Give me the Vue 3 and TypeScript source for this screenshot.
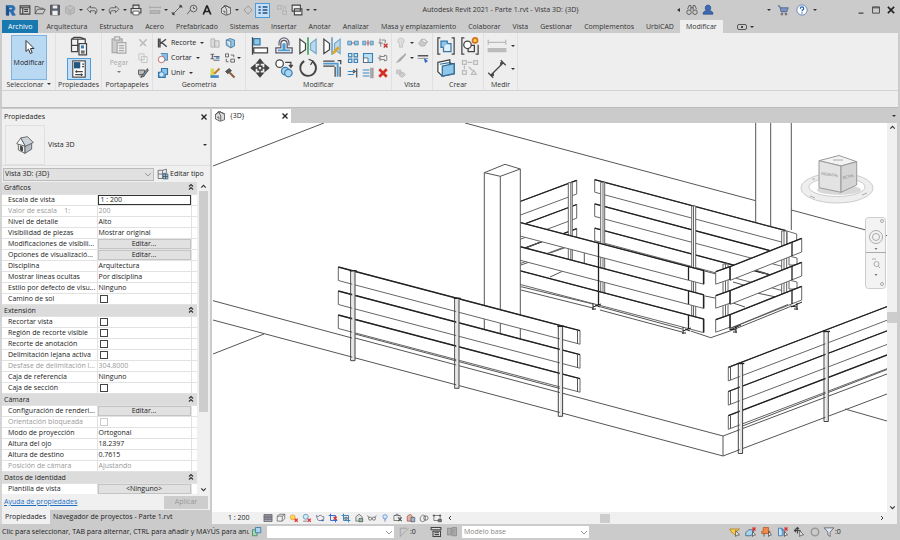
<script setup lang="ts">
import { ref } from 'vue'

type Point = [number, number]
interface Tool { icon: string; label: string; kind?: 'on' | 'caret' | 'gap' }
interface Prop { name: string; value?: string; kind?: 'text' | 'button' | 'check' | 'input'; off?: boolean }
interface Section { title: string; rows: Prop[] }

const icons: Record<string, string> = {
  revit: '<path d="M3 2h7c3 0 4.500 1.500 4.500 4 0 2-1 3-2.500 3.500L15 15h-4l-2.500-5H6.500v5H3z M6.500 4.500v3H9c1.300 0 2-.500 2-1.500s-.700-1.500-2-1.500z" fill="#2b6cb0" stroke="#2b6cb0" fill-rule="evenodd"/><path d="M3 2l3.500 2.500V15H3z" fill="#1c4f86" stroke="none"/>',
  panel: '<path d="M1.500 2.500h13v11h-13z M1.500 5h13 M5 5v8.500 M7 7.500h5 M7 10h5" stroke-width="1.500"/>',
  folder: '<path d="M1.500 13V3.500H6l1.500 2H12V7 M1.500 13l3-6H15l-3 6z"/>',
  save: '<path d="M2 1.500h12v13H2z" fill="#59616c"/><path d="M5 2h6v4H5z M4.500 9h7v5.500h-7z" fill="#eee" stroke="none"/>',
  cubeoff: '<path d="M8 1.500l6 3v7l-6 3-6-3v-7z M2 4.500l6 3 6-3 M8 7.500v7" stroke="#aaa" fill="#bbb"/>',
  undo: '<path d="M6 2.500L1.500 7 6 11.500V9h5c2 0 2 3 1 4.500 3-1.500 4-8-1-8.500H6z"/>',
  redo: '<path d="M10 2.500L14.500 7 10 11.500V9H5c-2 0-2 3-1 4.500C1 12 0 5.500 5 5h5z"/>',
  print: '<path d="M4 6V1.500h8V6 M1.500 6h13v6h-13z" fill="#ddd" stroke-width="1.500"/><path d="M4 9.500h8v5H4z" fill="#fff"/>',
  ruler: '<path d="M1 4.500h14 M1 3v3 M15 3v3 M1.500 9h13v3.500h-13z" stroke="#999" fill="#bbb"/>',
  dim: '<path d="M3 13L13 3 M1 11l4 4 M11 1l4 4"/><circle cx="3" cy="13" r="1.300" fill="#444"/><circle cx="13" cy="3" r="1.300" fill="#444"/>',
  tag: '<circle cx="10" cy="6" r="4.500"/><path d="M6 8l-4.500 5.500 M10 3.500V6h2"/>',
  letter: '<path d="M8 2L3 14M8 2l5 12M4.800 10h6.500" stroke="#222" stroke-width="2.300"/>',
  house: '<path d="M8 2l6 4v7l-6 2-6-3V6z" fill="#ddd"/><path d="M1.500 6.500L6 2l8.500 3M6 2l3 6v6.500 M4 9.500h2.500v3"/>',
  diamond: '<path d="M8 2.500l5.500 5.500L8 13.500 2.500 8z" stroke="#888"/>',
  thin: '<path d="M2 4h3 M2 8h3 M2 12h3 M7.500 4H14 M7.500 8H14 M7.500 12H14" stroke-width="2" stroke="#225080"/>',
  closeoff: '<path d="M2 2h5v5H2z M9 9h5v5H9z M9 2l5 5 M14 2L9 7" stroke="#aaa"/>',
  windows: '<path d="M1.500 1.500h11v8h-11z M4.500 6.500h10v8h-10z" fill="#eee" stroke-width="1.500"/>',
  binocular: '<path d="M2 7l2-5h2.500v6 M14 7l-2-5H9.500v6 M6.500 5h3"/><circle cx="4" cy="11" r="3"/><circle cx="12" cy="11" r="3"/>',
  user: '<path d="M8 1.500c5 0 4 6 2 7.500 4 .500 4.500 2 4.500 4.500h-13C1.500 11 2 9.500 6 9 4 7.500 3 1.500 8 1.500z" fill="#3c69b5" stroke="#274a86"/>',
  cart: '<path d="M1 2.500h2.500l2 8H13L15 5H4" fill="#7b93c0" stroke="#465b86"/><circle cx="6.500" cy="13.500" r="1.200"/><circle cx="12" cy="13.500" r="1.200"/>',
  help: '<circle cx="8" cy="8" r="6.800" fill="#fff" stroke="#4b72aa"/><path d="M5.800 6.200c0-3 4.500-3 4.500 0 0 1.600-2.200 1.600-2.200 3.300M8 11v1.500" stroke="#285fb0" stroke-width="1.700"/>',
  min: '<path d="M4 13h8" stroke-width="2"/>',
  max: '<path d="M2.500 3h11v10h-11z M2.500 4.500h11" stroke-width="1.500"/>',
  close: '<path d="M3 3l10 10M13 3L3 13" stroke="#222" stroke-width="2.600"/>',
  cursor: '<path d="M5 1.500v11l2.500-2.300 1.800 4.300 1.900-.800-1.800-4.200H13z" fill="#fff" stroke="#333"/>',
  family: '<path d="M2 2.500h5v5H2z M7 2.500h6v5H7z M2 7.500h5v5H2z M7 7.500h3 M2 2.500L4 1h5l4 1.500" fill="#f4f4f4"/><path d="M8 6h6v9H8z" fill="#fff"/><path d="M9.500 7.500H12v2.500H9.500z" fill="#3b7db8" stroke="none"/><path d="M9.500 12h3M9.500 13.500h3"/>',
  props: '<path d="M3 1.500h10v13H3z" fill="#fff" stroke="#555"/><path d="M4 2.500h5v5H4z" fill="#235780" stroke="none"/><path d="M10.500 4h1.500M10.500 6h1.500M5 10h6M5 12.500h6M6 9v2M10 11.500v2"/>',
  paste: '<path d="M2.500 3h8v11h-8z" fill="#ccc" stroke="#aaa"/><path d="M4.500 1.500h4V4h-4z M6.500 6h7v8.500h-7z M8 8.500h4 M8 10.500h4 M8 12.500h4" fill="#eaeaea" stroke="#aaa"/>',
  cutoff: '<path d="M3 3l9 9M13 3l-9 9" stroke="#bbb" stroke-width="2"/>',
  copyoff: '<path d="M2.500 2.500h7v8h-7z M6 6h7.500v8H6z" fill="#eee" stroke="#bbb"/>',
  match: '<path d="M2 4h8v6H2z M3 12h7" fill="#bbb"/><path d="M14 2L7 11l-2 3 4-1.500 6-8z" fill="#7e8b98"/>',
  cope: '<path d="M2 2v12M4 2v5l3 1M4 14V9l8-6M7 8l6 5" stroke-width="1.800"/>',
  cut: '<path d="M5 2h9v9H9" fill="#86bde3" stroke="#3876a5"/><circle cx="6" cy="10" r="4.300" fill="#fff" stroke="#a44"/>',
  join: '<path d="M6 2h8v8h-3v4H2V7h4z" fill="#8fc4e8" stroke="#2e76ac" stroke-width="1.500"/><circle cx="6" cy="10" r="3.500" fill="#cbe6f8" stroke="#2e76ac"/>',
  wallcut: '<path d="M2.500 2.500h5v11h-5z M7.500 5h6v8.500h-6z" stroke="#aaa" fill="#ddd"/>',
  beam: '<path d="M2 3h5M4.500 3v6M2 9h5M6 6h8M6 11h8" stroke-width="1.600" stroke="#667"/><path d="M9 8h5" stroke="#3b88c4" stroke-width="2"/>',
  paintw: '<path d="M2 2h5v12H2z" fill="#d6d65a" stroke="none"/><path d="M2 11h11v3.500H2z" fill="#3b88c4" stroke="none"/><path d="M14 2L7 9" stroke-width="2.500" stroke="#c07b29"/>',
  solid: '<path d="M3 4l5-2 6 2v8l-5 2.500V6L3 4v7l6 3.500" fill="#8fc4e8" stroke="#3d6d90"/>',
  split: '<path d="M2 2.500h4v4H2z M9 9.500h5v4H9z M3 9v4h3 M9 4h4v3"/>',
  hammer: '<path d="M2 6l5-4 3 3-5 4z" fill="#555"/><path d="M7 7l7 7" stroke="#8b5e3c" stroke-width="2.500"/>',
  align: '<path d="M2 1v14" stroke-width="1"/><path d="M3 2h5v5H3z" fill="#8ec7ec" stroke="#3679a9"/><path d="M3 9.500h11v4H3z" fill="#fff"/>',
  offset: '<path d="M1.500 13.500V9.500h4V6a2.500 2.500 0 0 1 5 0v3.500h4v4z" stroke="#556" fill="#f8f8f8"/><path d="M3 11.500h4.500V6.500h1v5H13" stroke="#4b9ad0" stroke-width="1.500"/><path d="M4 7.500V5.500a4 4 0 0 1 8 0v2" stroke="#667"/>',
  mirror: '<path d="M1.500 2.500L6 6v5l-4.500 3z" fill="#fff"/><path d="M14.500 2.500L10 6v5l4.500 3z" fill="#b9daf0" stroke="#7aa8c9"/><path d="M8 1v14" stroke="#2e9e48" stroke-width="1.200"/>',
  mirrord: '<path d="M1.500 2.500L6 6v5l-4.500 3z" fill="#fff"/><path d="M14.500 2.500L10 6v5l4.500 3z" fill="#b9daf0" stroke="#7aa8c9"/><path d="M8 1v14" stroke="#3b88c4"/><path d="M13.500 9l-5 5" stroke="#e0a62c" stroke-width="2.200"/>',
  move: '<path d="M8 1L5.500 4h5z M8 15l-2.500-3h5z M1 8l3-2.500v5z M15 8l-3-2.500v5z" fill="#444"/><path d="M8 4v3M8 9v3M4 8h3M9 8h3M6.500 6.500h3v3h-3z" stroke-width="1.200"/>',
  copy: '<circle cx="4.500" cy="4.500" r="3" fill="#fff"/><path d="M9 3.500h4.500V7M12 5.500L13.500 7.500 15 5.500"/><circle cx="9" cy="10.500" r="3" fill="#a9d4ef" stroke="#3a7fb1"/><circle cx="11.500" cy="12" r="3" fill="#a9d4ef" stroke="#3a7fb1"/>',
  rotate: '<path d="M5 2.500a6.300 6.300 0 1 0 6.500.200" stroke-width="1.500"/><path d="M8.500 1l3.500 1.500-2 3"/>',
  trim: '<path d="M1 2.500h9M1 6.500h9" stroke-width="1"/><path d="M1 4.500h11.500V15" stroke="#4b9ad0" stroke-width="1.500"/><path d="M10.500 7v8M14.500 7v8M12.500 2h2.500v3"/>',
  splitel: '<path d="M1 5.500h5v5H1z M10 5.500h5v5h-5z" fill="#8ec7ec" stroke="#4b84aa"/><path d="M6 8h4" stroke="#a33"/>',
  splitgap: '<path d="M1 5.500h4v5H1z M11 5.500h4v5h-4z" fill="#8ec7ec" stroke="#4b84aa"/><path d="M8 4v8M6 8h4" stroke="#a33"/>',
  unpin: '<path d="M4 2v6M2 8h6M5 8v5M6 4h5v4" stroke="#666"/><path d="M9 9l5 5M14 9l-5 5" stroke="#c33" stroke-width="2"/>',
  array: '<path d="M2 2h4.500v4.500H2z M9.500 2H14v4.500H9.500z M2 9.500h4.500V14H2z M9.500 9.500H14V14H9.500z" stroke="#3a7fb1" fill="#d6ebf8" stroke-width="1.500"/>',
  scale: '<path d="M2 2h12v12H2z" stroke="#3a7fb1" fill="#b9dff5" stroke-width="1.500"/><path d="M2 8h6v6H2z" fill="#fff" stroke="#456"/>',
  pin: '<path d="M4 4v8M4 6h6V4l3 1v6l-3 1v-2H4M4 8H1" stroke="#666"/>',
  trims: '<path d="M1 6h8M1 10h8" stroke="#3b88c4" stroke-width="1.500"/><path d="M8 4l3 2-3 2M13 2v12" stroke-width="1.500"/>',
  trimm: '<path d="M1 4h9M1 8h9M1 12h9" stroke="#3b88c4" stroke-width="1.500"/><path d="M12 1v14M14.500 1v14"/>',
  del: '<path d="M3 3l10 10M13 3L3 13" stroke="#d32f24" stroke-width="3.600"/>',
  bulboff: '<path d="M8 1.500c6 0 4.500 6 2 8v4H6v-4c-2.500-2-4-8 2-8z" fill="#ddd" stroke="#bbb"/>',
  boxesoff: '<path d="M2 9l4-6h4l4 3-4 6H5z M6 3l3 5 5-2" fill="#ccc" stroke="#aaa"/>',
  brushoff: '<path d="M14 2L6 9l-4 5 5-2 7-8z" fill="#aaa" stroke="#aaa"/>',
  lines: '<path d="M1 5h14" stroke="#555" stroke-width="2"/><path d="M1 8.500h14" stroke="#777"/><path d="M10 9l1 5 3-2z" fill="#2862c4" stroke="#2862c4"/>',
  coinoff: '<path d="M2 4h6v5H2z M6 8l5-1 3 3-4 4-4-2z" fill="#ccc" stroke="#bbb"/>',
  group: '<path d="M3.500 1.500h-2v13h2M12.500 1.500h2v13h-2"/><path d="M4 4h5v5H4z" fill="#8ec7ec" stroke="#3679a9"/><path d="M6 9v3.500h6V6H9" fill="#dff0fb" stroke="#3679a9"/>',
  creategroup: '<path d="M3.500 1.500h-2v13h2M12.500 14.500h2V7"/><circle cx="6" cy="7" r="3" fill="#fff"/><path d="M6.500 9.500v3h5v-5H9"/><circle cx="12" cy="3.500" r="2" fill="#ffd24d" stroke="#d66f1d" stroke-width="1.300"/>',
  parts: '<path d="M1.500 3.500L11 1.500v3l3.500 0v8L5 14.500 1.500 11z" fill="#fff"/><path d="M3 5l9-1.500M5 6.500l9.500-2v8L5 14.500z" fill="#8ec7ec" stroke="#346f9c"/>',
  assembly: '<path d="M2 2h3v3H2z M11 2h3v3h-3z M2 10h3v3H2z M11 10l2 3h-4z M6 3.500h4 M7 7l3 3 M3.500 6v3" stroke="#bbb"/>',
  measoff: '<path d="M1 5h14M1 3v4M15 3v4" stroke="#bbb"/><path d="M1 10h14v2.500H1z" stroke="#bbb" fill="#bbb"/>',
  measure: '<path d="M3 13L13 3M1 11l4 4M11 1l4 4M5 10.500V13H2.800M11 5.500V3h2.300"/>',
  edittype: '<path d="M1.500 3h6v5h-6z M7.500 3l5-1.500V7l-5 1 M1.500 8v6h6V8" fill="#e6eef5" stroke="#555"/><path d="M8 8h6.500v6.500H8z" fill="#8ec7ec" stroke="#456"/><path d="M8 11.300h6.500M11.300 8v6.500"/>',
  detail: '<path d="M1.500 2.500h13v11h-13z M2 5h12 M2 7.500h12 M2 10h12" fill="#aab"/>',
  style: '<path d="M2 5l4-3h8v7l-4 4H2z M2 5h8v8 M10 5l4-3"/>',
  sun: '<circle cx="6" cy="7" r="4" fill="#ffd65a" stroke="#e09020"/><path d="M9 9l5 5M14 9l-5 5" stroke="#d33" stroke-width="2"/>',
  shadow: '<circle cx="6" cy="6" r="4" fill="#d3eaf7" stroke="#2f7cb4"/><path d="M2 13h6"/><path d="M9 9l5 5M14 9l-5 5" stroke="#d33" stroke-width="2"/>',
  teapot: '<path d="M2 4l3 2c1-3 6-3 7 0l2 0v4l-4 2H6C3 11 4 8 2 4z" stroke="#447"/><path d="M10 12l4 0" stroke="#36a" stroke-width="2"/>',
  crop: '<path d="M4 1v11h11M1 4h11v11" stroke="#36c" stroke-width="1.500"/><path d="M9 6l5 5M14 6l-5 5" stroke="#d33" stroke-width="2"/>',
  cropb: '<path d="M4 1v11h11M1 4h11v11" stroke="#357fb8" stroke-width="1.500"/><path d="M6 7h4v3H6z" fill="#8ec7ec"/>',
  lock: '<path d="M3 6l5-4 5 4v7H3z" fill="#e5e5e5"/><path d="M8 9h6v5H8z" fill="#8fc79a"/>',
  glasses: '<path d="M1 4l2 4M15 4l-3 4"/><circle cx="5" cy="9" r="2.500"/><circle cx="11" cy="9" r="2.500"/>',
  bulb: '<circle cx="8" cy="6" r="3.500" fill="#cfe6fa" stroke="#3b7fd0"/><path d="M6.500 11h3M7 13h2" stroke="#36a"/>',
  camx: '<path d="M1.500 4h10v8h-10z M4 4l1-2h3l1 2"/><path d="M8 7l6 6M14 7l-6 6" stroke="#555" stroke-width="2"/>',
  analyt: '<path d="M2 13V5l5-3 3 3v8z" fill="#eab0a0" stroke="#844"/><path d="M8 7h6v7H8z" fill="#9fb8dc"/>',
  link: '<path d="M2 7l4-4 4 2v7l-4 2-4-2z"/><circle cx="11" cy="8" r="3.500"/>',
  constraint: '<path d="M3 4h10v8H3z M1 4h4 M11 4h4 M3 2v4 M13 2v4"/><path d="M10 10h5v4h-5z" fill="#777"/>',
  sync: '<path d="M2 5h6v8H2z" fill="#a7d7aa" stroke="#36805a"/><path d="M6 2h7v7H6z" fill="#a9d4ef" stroke="#2a6ea5"/>',
  penoff: '<path d="M3 14V3h9M3 14L14 3" stroke="#999"/>',
  worksets: '<path d="M1.500 2h13v3h-13z M4 7h10v7H4z M6 9h6M6 11.500h6" stroke-width="1.400" fill="#ddd"/>',
  optoff: '<path d="M2 3h5v9H2z M8 2h6v11H8z M10 5h2 M10 8h2" stroke="#888" fill="#aaa"/>',
  s1: '<path d="M1 4h13l-5 4v5l-3-3-2-1z" fill="#ffcc4a" stroke="#a87c14"/><path d="M9 6v8l2-2h3z" fill="#fff"/>',
  s2: '<path d="M1 9l4-4h6v4l-3 4H1z" fill="#a9d4ef" stroke="#357"/><path d="M10 2l4 4M14 2l-4 4" stroke="#d33" stroke-width="2"/><path d="M10 7v7l2-2h2z" fill="#fff"/>',
  s3: '<path d="M3 2h7v5h2v3H1V7h2z" fill="#f08a4b" stroke="#b5551c"/><path d="M4 10v4"/><path d="M10 7v7l2-2h2z" fill="#fff"/>',
  s4: '<path d="M2 3h5v10H2z M5 5h4v8" stroke="#2a6ea5" fill="#cfe6fa"/><path d="M10 2l4 4M14 2l-4 4" stroke="#d33" stroke-width="2"/><path d="M10 7v7l2-2h2z" fill="#fff"/>',
  s5: '<path d="M6 2v8M2 6h8M4 4l2-2 2 2M4 8L2 6l2-2" stroke-width="1.500"/><path d="M9 6v8l2-2h3z" fill="#fff"/>',
  s6: '<circle cx="8" cy="8" r="5" stroke="#999" stroke-width="2"/>',
  filter: '<path d="M1.500 2.500h13L9.500 8v6l-3-2V8z" fill="#dfe8f0" stroke="#556"/>',
}

const quick: Tool[] = [
  { icon: 'revit', label: 'Revit' }, { icon: 'panel', label: 'Inicio' },
  { icon: 'folder', label: 'Abrir' }, { icon: 'save', label: 'Guardar' }, { icon: 'cubeoff', label: 'Sincronizar' },
  { icon: '', label: 'Opciones', kind: 'caret' }, { icon: 'undo', label: 'Deshacer' }, { icon: '', label: 'Lista', kind: 'caret' },
  { icon: 'redo', label: 'Rehacer' }, { icon: '', label: 'Lista', kind: 'caret' }, { icon: 'print', label: 'Imprimir' },
  { icon: '', label: '', kind: 'gap' }, { icon: 'ruler', label: 'Medir' }, { icon: '', label: 'Lista', kind: 'caret' },
  { icon: 'dim', label: 'Cota' }, { icon: 'tag', label: 'Etiqueta' }, { icon: 'letter', label: 'Texto' },
  { icon: '', label: '', kind: 'gap' }, { icon: 'house', label: 'Vista 3D' }, { icon: '', label: 'Lista', kind: 'caret' },
  { icon: 'diamond', label: 'Sección' }, { icon: 'thin', label: 'Líneas finas', kind: 'on' },
  { icon: '', label: '', kind: 'gap' }, { icon: 'closeoff', label: 'Cerrar inactivas' }, { icon: 'windows', label: 'Cambiar ventanas' },
  { icon: '', label: 'Lista', kind: 'caret' }, { icon: '', label: 'Personalizar', kind: 'caret' },
]

const tabs = ['Arquitectura', 'Estructura', 'Acero', 'Prefabricado', 'Sistemas', 'Insertar', 'Anotar', 'Analizar',
  'Masa y emplazamiento', 'Colaborar', 'Vista', 'Gestionar', 'Complementos', 'UrbiCAD']

const geometry = [
  { icon: 'cope', text: 'Recorte', a: 'wallcut', b: 'solid', more: false },
  { icon: 'cut', text: 'Cortar', a: 'beam', b: 'split', more: true },
  { icon: 'join', text: 'Unir', a: 'paintw', b: 'hammer', more: false },
]
const bigModify = ['align', 'offset', 'mirror', 'mirrord', 'move', 'copy', 'rotate', 'trim']
const smallModify = ['splitel', 'splitgap', 'unpin', 'array', 'scale', 'pin', 'trims', 'trimm', 'del']

const scale = ref('1 : 200')
const sections: Section[] = [
  { title: 'Gráficos', rows: [
    { name: 'Escala de vista', kind: 'input' },
    { name: 'Valor de escala    1:', value: '200', off: true },
    { name: 'Nivel de detalle', value: 'Alto' },
    { name: 'Visibilidad de piezas', value: 'Mostrar original' },
    { name: 'Modificaciones de visibili...', value: 'Editar...', kind: 'button' },
    { name: 'Opciones de visualizació...', value: 'Editar...', kind: 'button' },
    { name: 'Disciplina', value: 'Arquitectura' },
    { name: 'Mostrar líneas ocultas', value: 'Por disciplina' },
    { name: 'Estilo por defecto de visu...', value: 'Ninguno' },
    { name: 'Camino de sol', kind: 'check' },
  ] },
  { title: 'Extensión', rows: [
    { name: 'Recortar vista', kind: 'check' },
    { name: 'Región de recorte visible', kind: 'check' },
    { name: 'Recorte de anotación', kind: 'check' },
    { name: 'Delimitación lejana activa', kind: 'check' },
    { name: 'Desfase de delimitación l...', value: '304.8000', off: true },
    { name: 'Caja de referencia', value: 'Ninguno' },
    { name: 'Caja de sección', kind: 'check' },
  ] },
  { title: 'Cámara', rows: [
    { name: 'Configuración de renderi...', value: 'Editar...', kind: 'button' },
    { name: 'Orientación bloqueada', kind: 'check', off: true },
    { name: 'Modo de proyección', value: 'Ortogonal' },
    { name: 'Altura del ojo', value: '18.2397' },
    { name: 'Altura de destino', value: '0.7615' },
    { name: 'Posición de cámara', value: 'Ajustando', off: true },
  ] },
  { title: 'Datos de identidad', rows: [
    { name: 'Plantilla de vista', value: '<Ninguno>', kind: 'button' },
  ] },
]

const viewTools = ['detail', 'style', 'sun', 'shadow', 'teapot', 'crop', 'cropb', 'lock', 'glasses', 'bulb', 'camx', 'analyt', 'link', 'constraint']
const selectTools = ['s1', 's2', 's3', 's4', 's5', 's6']

// Each plank is a filled band so that it hides whatever stands behind it.
const plank = (a: Point, b: Point, h: number) => ({
  fill: `M${a[0]} ${a[1]}L${b[0]} ${b[1]}V${b[1] + h}L${a[0]} ${a[1] + h}Z`,
  edge: `M${a[0]} ${a[1]}L${b[0]} ${b[1]}`,
})
const rails = (a: Point, b: Point, h: number, step: number) =>
  [0, 1, 2].map(i => plank([a[0], a[1] + i * step], [b[0], b[1] + i * step], h))

const backLeft = rails([512, 204.5], [576.700, 180.300], 13.700, 24.200)
const backRight = rails([594.700, 179.700], [786, 230.700], 12.500, 24.200)
const sideRails = rails([730, 266.700], [801.700, 238.300], 13.700, 24)
const sideStubs = rails([715.700, 271.700], [730, 266.700], 12.500, 24)
const innerRails = rails([512, 220.300], [704, 270.700], 13.600, 24.200)
const frontRails = rails([338.300, 267], [580, 330.700], 13.500, 24)
const rightRails = rails([728.300, 367.300], [890, 305.500], 13.600, 24.200)
const frontPosts: Point[] = [[350.700, 270.700], [454.700, 298.300], [558.300, 326.300]]
const rightPosts: Point[] = [[738.300, 363.500], [824, 331.500]]
const feet: Point[] = [[593, 303], [683, 327]]
const feetRight: Point[] = [[729, 326], [790, 303]]
</script>

<template>
  <div class="app">
    <header class="titlebar">
      <div class="quick">
        <template v-for="(t, i) in quick" :key="i">
          <span v-if="t.kind === 'gap'" class="gap"></span>
          <button v-else-if="t.kind === 'caret'" class="caret-btn" :aria-label="t.label"><i class="caret"></i></button>
          <button v-else class="cell" :class="{ on: t.kind === 'on' }" :aria-label="t.label">
            <svg class="ic" viewBox="0 0 16 16" v-html="icons[t.icon]"></svg>
          </button>
        </template>
      </div>
      <h1>Autodesk Revit 2021 - Parte 1.rvt - Vista 3D: {3D}</h1>
      <div class="account">
        <i class="caret left"></i>
        <button class="cell" aria-label="Buscar"><svg class="ic" viewBox="0 0 16 16" v-html="icons.binocular"></svg></button>
        <button class="cell" aria-label="Usuario"><svg class="ic" viewBox="0 0 16 16" v-html="icons.user"></svg></button>
      </div>
      <div class="shop">
        <i class="caret"></i>
        <button class="cell" aria-label="Tienda"><svg class="ic" viewBox="0 0 16 16" v-html="icons.cart"></svg></button>
        <button class="cell" aria-label="Ayuda"><svg class="ic" viewBox="0 0 16 16" v-html="icons.help"></svg></button>
        <i class="caret"></i>
      </div>
      <div class="window-tools">
        <button class="cell" aria-label="Minimizar"><svg class="ic sm" viewBox="0 0 16 16" v-html="icons.min"></svg></button>
        <button class="cell" aria-label="Maximizar"><svg class="ic sm" viewBox="0 0 16 16" v-html="icons.max"></svg></button>
        <button class="cell" aria-label="Cerrar"><svg class="ic sm" viewBox="0 0 16 16" v-html="icons.close"></svg></button>
      </div>
    </header>

    <nav class="tabs">
      <button class="tab file">Archivo</button>
      <button v-for="t in tabs" :key="t" class="tab">{{ t }}</button>
      <button class="tab active">Modificar</button>
      <button class="tab extra" aria-label="Estado de la cinta"><i class="pill"><i class="dot"></i></i><i class="caret"></i></button>
    </nav>

    <section class="ribbon">
      <div class="group g-select">
        <div class="body"><button class="big-on"><svg viewBox="0 0 16 16" v-html="icons.cursor"></svg><span>Modificar</span></button></div>
        <div class="title">Seleccionar <i class="caret"></i></div>
      </div>
      <div class="group g-props">
        <div class="body stack">
          <button class="wide" aria-label="Tipo"><svg class="lg" viewBox="0 0 16 16" v-html="icons.family"></svg></button>
          <button class="wide on" aria-label="Propiedades"><svg class="lg" viewBox="0 0 16 16" v-html="icons.props"></svg></button>
        </div>
        <div class="title">Propiedades</div>
      </div>
      <div class="group g-clip">
        <div class="body clip">
          <button class="paste" disabled><svg class="lg" viewBox="0 0 16 16" v-html="icons.paste"></svg><span>Pegar</span><i class="caret"></i></button>
          <div class="rows3">
            <button v-for="n in ['cutoff', 'copyoff', 'match']" :key="n" class="cell" :aria-label="n"><svg class="ic" viewBox="0 0 16 16" v-html="icons[n]"></svg></button>
          </div>
        </div>
        <div class="title">Portapapeles</div>
      </div>
      <div class="group g-geo">
        <div class="body rows3">
          <div v-for="g in geometry" :key="g.text" class="geo-row">
            <button class="geo-btn"><svg class="ic" viewBox="0 0 16 16" v-html="icons[g.icon]"></svg>{{ g.text }}<i class="caret"></i></button>
            <button class="cell" aria-label="Herramienta"><svg class="ic" viewBox="0 0 16 16" v-html="icons[g.a]"></svg></button>
            <button class="cell" aria-label="Herramienta"><svg class="ic" viewBox="0 0 16 16" v-html="icons[g.b]"></svg></button>
            <i class="caret" :class="{ hidden: !g.more }"></i>
          </div>
        </div>
        <div class="title">Geometría</div>
      </div>
      <div class="group g-mod">
        <div class="body mod">
          <div class="big-grid">
            <button v-for="n in bigModify" :key="n" class="big" :aria-label="n"><svg class="lg" viewBox="0 0 16 16" v-html="icons[n]"></svg></button>
          </div>
          <div class="small-grid">
            <button v-for="n in smallModify" :key="n" class="cell" :aria-label="n"><svg class="ic" viewBox="0 0 16 16" v-html="icons[n]"></svg></button>
          </div>
        </div>
        <div class="title">Modificar</div>
      </div>
      <div class="group g-view">
        <div class="body rows3">
          <div class="view-row"><svg class="ic" viewBox="0 0 16 16" v-html="icons.bulboff"></svg><i class="caret"></i><svg class="ic" viewBox="0 0 16 16" v-html="icons.boxesoff"></svg></div>
          <div class="view-row"><svg class="ic" viewBox="0 0 16 16" v-html="icons.brushoff"></svg><i class="caret"></i><svg class="ic" viewBox="0 0 16 16" v-html="icons.lines"></svg></div>
          <div class="view-row"><svg class="ic" viewBox="0 0 16 16" v-html="icons.coinoff"></svg></div>
        </div>
        <div class="title">Vista</div>
      </div>
      <div class="group g-create">
        <div class="body big-grid two">
          <button v-for="n in ['group', 'creategroup', 'parts', 'assembly']" :key="n" class="big" :aria-label="n"><svg class="lg" viewBox="0 0 16 16" v-html="icons[n]"></svg></button>
        </div>
        <div class="title">Crear</div>
      </div>
      <div class="group g-meas">
        <div class="body stack">
          <button class="meas" aria-label="Medir"><svg class="lg" viewBox="0 0 16 16" v-html="icons.measoff"></svg><i class="caret"></i></button>
          <button class="meas" aria-label="Cota"><svg class="lg" viewBox="0 0 16 16" v-html="icons.measure"></svg><i class="caret"></i></button>
        </div>
        <div class="title">Medir</div>
      </div>
    </section>
    <div class="options"></div>

    <main class="work">
      <aside class="side">
        <div class="side-head"><span>Propiedades</span><button aria-label="Cerrar"><svg class="xs" viewBox="0 0 16 16" v-html="icons.close"></svg></button></div>
        <div class="type">
          <div class="thumb">
            <svg viewBox="0 0 24 24">
              <path d="M4 9.500l8 4v8.500l-8-4z" fill="#eef1f4" stroke="#555" /><path d="M12 13.500l8-4.500v8l-8 5z" fill="#b4bcc7" stroke="#555" />
              <path d="M2 10.500l5-7 5.500 10z" fill="#f4f6f8" stroke="#555" /><path d="M7 3.500l8-1.500 7 7-9.500 4.500z" fill="#ccd3db" stroke="#555" />
              <path d="M6.500 13l2.500 1.300v5L6.500 18z" fill="#444" />
            </svg>
          </div>
          <span>Vista 3D</span><i class="caret"></i>
        </div>
        <div class="selector">
          <select aria-label="Vista"><option>Vista 3D: {3D}</option></select>
          <button class="edit-type"><svg class="ic" viewBox="0 0 16 16" v-html="icons.edittype"></svg>Editar tipo</button>
        </div>
        <div class="grid-wrap">
          <table>
            <colgroup><col class="c-name"><col class="c-value"><col class="c-tail"></colgroup>
            <tbody v-for="(s, si) in sections" :key="s.title">
              <tr class="sec"><th colspan="3"><span>{{ s.title }}</span><svg viewBox="0 0 8 8"><path d="M2 3.500L4 1.500l2 2M2 6.500L4 4.500l2 2" fill="none" stroke="#333" stroke-width="1.200" /></svg></th></tr>
              <tr v-for="(r, ri) in s.rows" :key="r.name" :class="{ off: r.off }">
                <td class="name"><label :for="`p${si}-${ri}`">{{ r.name }}</label></td>
                <td class="value">
                  <input v-if="r.kind === 'input'" :id="`p${si}-${ri}`" v-model="scale" class="field" />
                  <button v-else-if="r.kind === 'button'" :id="`p${si}-${ri}`" class="edit">{{ r.value }}</button>
                  <input v-else-if="r.kind === 'check'" :id="`p${si}-${ri}`" type="checkbox" :disabled="r.off" />
                  <output v-else :id="`p${si}-${ri}`">{{ r.value }}</output>
                </td>
                <td class="tail"></td>
              </tr>
            </tbody>
          </table>
          <div class="vbar">
            <svg viewBox="0 0 8 8"><path d="M2 5l2-2 2 2" /></svg>
            <div class="side-thumb"></div>
            <div class="fill"></div>
            <svg viewBox="0 0 8 8"><path d="M2 3l2 2 2-2" /></svg>
          </div>
        </div>
        <div class="side-foot"><a href="#ayuda">Ayuda de propiedades</a><button disabled>Aplicar</button></div>
        <div class="side-tabs"><button class="active">Propiedades</button><button>Navegador de proyectos - Parte 1.rvt</button></div>
      </aside>

      <section class="viewer">
        <div class="doc-tabs">
          <div class="doc"><svg class="ic" viewBox="0 0 16 16" v-html="icons.house"></svg><span>{3D}</span>
            <button aria-label="Cerrar vista"><svg class="xs" viewBox="0 0 16 16" v-html="icons.close"></svg></button></div>
          <i class="caret"></i>
        </div>
        <div class="stage">
          <svg class="scene" viewBox="213 123 674 389" preserveAspectRatio="xMinYMin slice">
            <g class="thin">
              <path d="M213 166L324 123M465 123L755.700 200.700M791.300 210L887 235.700" />
              <path d="M213 300.700L352 338M213 320L723 456V436L355 338M355 334L560 388.500M213 354L264 334" />
              <path d="M723 436L887 374M723 456L887 394M845 409L887 421" />
              <path d="M755.700 123V222M770.700 123V226M791.300 123V230" />
            </g>

            <g v-for="p in backRight" :key="p.fill"><path class="plank" :d="p.fill" /><path class="edge" :d="p.edge" /></g>
            <g v-for="p in backLeft" :key="p.fill"><path class="plank" :d="p.fill" /><path class="edge" :d="p.edge" /></g>
            <path class="post" d="M568.300 182.700h4V262h-4zM570.800 182.700V262M600.700 182.300h4V300h-4zM603 182.300V300M691.700 206h4V320h-4zM693.500 206V320" />
            <path class="post" d="M781.700 231h5V300h-5zM784 231V300M787 231l9.700 3V241l-9.700 3zM789 256l8 2V265h-8zM789 280l8 2V289h-8z" />
            <path class="thin" d="M697 269L716 274M755 270L768 274M733 282L754 288M760 272L781 278M733 303L745 307M752 292L781 298M705 296L715 298" />
            <path class="thin" d="M521 250L543 241M550 253L567 247M521 265L535 260M550 277L563 271M584.300 252V266M521 286.700L593 304M600 306.700L682 329M521 290L593 308M600 310L682 332" />
            <path class="post" d="M723 264h5V322h-5zM725.500 264V322" />

            <g v-for="p in sideRails" :key="p.fill"><path class="plank" :d="p.fill" /><path class="edge" :d="p.edge" /></g>
            <g v-for="p in sideStubs" :key="p.fill"><path class="plank" :d="p.fill" /><path class="edge" :d="p.edge" /></g>
            <path class="edge" d="M792 242V256M792 266V280M792 290V304M730 266V280M730 290V304M730 314V328" />
            <g v-for="p in innerRails" :key="p.fill"><path class="plank" :d="p.fill" /><path class="edge" :d="p.edge" /></g>
            <path class="edge" d="M598.500 243V305M688.500 266V280M688.500 291V304M688.500 315V329M703.500 270V284M703.500 295V308M703.500 319V332" />
            <path class="thin" d="M690.700 331L710.700 337.700L730 331L790 306.700M731 328L788 304.500" />
            <path v-for="f in feet" :key="f[0]" class="foot" :d="`M${f[0]} ${f[1]}v7M${f[0] - 1} ${f[1] + 6}h4M${f[0]} ${f[1] + 4}l8-3M${f[0] + 2} ${f[1] + 2}l5 2`" />
            <path v-for="f in feetRight" :key="f[0]" class="foot" :d="`M${f[0] + 7} ${f[1]}v7M${f[0] + 4} ${f[1] + 6}h4M${f[0]} ${f[1] + 3}l7 1M${f[0] + 1} ${f[1] + 4}l11-5`" />

            <path class="white" d="M484.300 172.700L505 164.300L520.300 169V344L484.300 336z" />
            <path class="thin" d="M484.300 336V172.700L505 164.300L520.300 169V344M484.300 172.700L500.300 176.300L520.300 169M500.300 176.300V340" />

            <g v-for="p in frontRails" :key="p.fill"><path class="plank" :d="p.fill" /><path class="edge" :d="p.edge" /></g>
            <path class="thin" d="M577.500 330V344M577.500 354V368M577.500 378V392" />
            <g v-for="p in rightRails" :key="p.fill"><path class="plank" :d="p.fill" /><path class="edge" :d="p.edge" /></g>
            <path class="thin" d="M730.500 366.500V380M730.500 391V404M730.500 415V428M740 427L887 369.500" />
            <g v-for="p in [...frontPosts, ...rightPosts]" :key="p[0]">
              <path class="post-side" :d="`M${p[0] + 3} ${p[1]}v90`" />
              <path class="post front" :d="`M${p[0]} ${p[1]}h4.300v90h-4.300z`" />
              <path class="edge" :d="`M${p[0] - 1} ${p[1]}h7`" />
            </g>

            <g class="cube">
              <ellipse cx="837" cy="188" rx="36" ry="15" /><ellipse class="hole" cx="837" cy="187" rx="28" ry="9.500" />
              <path class="mark" d="M810 196l5 2M862 195l5-2M812 179h3" />
              <ellipse class="shade" cx="839" cy="190" rx="22" ry="5" />
              <path d="M819 160.700L839 155.500L856.700 161.700L841 166z" fill="#f3f3f3" />
              <path d="M819 160.700L841 166V192.300L819 187.700z" fill="#e3e3e3" />
              <path d="M841 166L856.700 161.700V185L841 192.300z" fill="#d5d5d5" />
              <text x="821" y="175" transform="rotate(7 821 175)">FRONTAL</text>
              <text x="843" y="179" transform="rotate(-12 843 179)">DCHA.</text>
              <path class="mark" d="M833 160h10" />
            </g>
            <g class="navbar">
              <rect x="865.500" y="217.500" width="20" height="71" rx="3" />
              <circle cx="876" cy="237" r="6.500" /><circle cx="876" cy="237" r="3.500" /><circle cx="882" cy="221" r="1.500" /><circle cx="882" cy="284" r="1.500" />
              <path d="M866 252.500h20M872 259h4" /><circle cx="876.500" cy="264" r="2.500" /><path d="M878 266l2 2" />
              <path class="tri" d="M874.500 248h3l-1.500 2zM874.500 274h3l-1.500 2z" />
            </g>
          </svg>
          <div class="vbar view-v">
            <svg viewBox="0 0 8 8"><path d="M2 5l2-2 2 2" /></svg>
            <div class="fill"></div><div class="view-thumb"></div><div class="fill"></div>
            <svg viewBox="0 0 8 8"><path d="M2 3l2 2 2-2" /></svg>
          </div>
        </div>
        <div class="view-bar">
          <span class="ratio">1 : 200</span>
          <button v-for="n in viewTools" :key="n" class="vt" :aria-label="n"><svg class="sm" viewBox="0 0 16 16" v-html="icons[n]"></svg></button>
          <button class="vt" aria-label="Anterior"><svg class="xs" viewBox="0 0 16 16"><path d="M10 4L6 8l4 4" stroke-width="2" /></svg></button>
          <div class="hbar"><div class="h-thumb"></div></div>
          <svg class="xs" viewBox="0 0 16 16"><path d="M6 4l4 4-4 4" stroke-width="2" /></svg>
        </div>
      </section>
    </main>

    <footer class="status">
      <span class="hint">Clic para seleccionar, TAB para alternar, CTRL para añadir y MAYÚS para anular</span>
      <svg class="ic" viewBox="0 0 16 16" v-html="icons.sync"></svg>
      <select class="combo" aria-label="Subproyecto"><option></option></select>
      <span class="count"><svg class="ic" viewBox="0 0 16 16" v-html="icons.penoff"></svg>:0</span>
      <div class="pair">
        <svg class="ic" viewBox="0 0 16 16" v-html="icons.worksets"></svg>
        <svg class="ic" viewBox="0 0 16 16" v-html="icons.optoff"></svg>
      </div>
      <select class="combo" aria-label="Opción de diseño"><option>Modelo base</option></select>
      <div class="sel-tools">
        <button v-for="n in selectTools" :key="n" class="st" :aria-label="n"><svg class="ic" viewBox="0 0 16 16" v-html="icons[n]"></svg></button>
        <span class="count"><svg class="ic" viewBox="0 0 16 16" v-html="icons.filter"></svg>:0</span>
      </div>
    </footer>
  </div>
</template>

<style>
html, body { margin: 0; background: #cbcbcb; }
</style>

<style scoped>
* { box-sizing: border-box; }
.app { height: 100vh; min-height: 540px; display: flex; flex-direction: column; background: #cbcbcb; color: #222; font-family: "Open Sans", "Noto Sans", sans-serif; font-size: 7px; line-height: 10px; overflow: hidden; }
button, input, select { font: inherit; color: inherit; margin: 0; padding: 0; border: 0; background: none; border-radius: 0; }
svg { display: block; flex: none; fill: none; stroke: #444; }
.ic { width: 12px; height: 12px; }
.sm { width: 10px; height: 10px; }
.xs { width: 8px; height: 8px; }
.lg { width: 20px; height: 20px; }
.cell { width: 15px; height: 15px; display: flex; align-items: center; justify-content: center; flex: none; }
.caret { display: inline-block; flex: none; width: 0; height: 0; border: 2px solid transparent; border-top-color: #333; border-bottom-width: 0; }
.caret.left { border: 2px solid transparent; border-right: 3px solid #333; border-left-width: 0; }
.caret.hidden { visibility: hidden; }

.titlebar { height: 20px; flex: none; display: flex; align-items: center; padding: 0 2px; }
.quick { display: flex; align-items: center; flex: 1; }
.caret-btn { width: 7px; height: 15px; display: flex; align-items: center; justify-content: center; flex: none; }
.gap { width: 4px; }
.on { background: #c5e0f6; border: 1px solid #4f9bd6; }
h1 { margin: 0; font-size: 7px; font-weight: 400; color: #333; white-space: nowrap; padding-right: 98px; }
.account, .shop { display: flex; align-items: center; gap: 1px; }
.account { padding-right: 52px; }
.account .caret { margin-right: 3px; }
.shop { gap: 4px; padding-right: 36px; }
.window-tools { display: flex; }

.tabs { height: 13px; flex: none; display: flex; padding-left: 2px; }
.tab { padding: 0 6px; white-space: nowrap; color: #333; line-height: 13px; }
.file { background: #1878b0; color: #fff; margin-right: 2px; }
.active { background: #eee; }
.extra { display: flex; align-items: center; gap: 3px; padding-left: 14px; }
.pill { display: flex; align-items: center; justify-content: center; width: 10px; height: 6px; border: 1px solid #555; border-radius: 2px; }
.dot { width: 2px; height: 2px; background: #444; }

.ribbon { height: 58px; flex: none; display: flex; background: #eee; border-bottom: 1px solid #d2d2d2; margin: 0 2px; }
.group { display: flex; flex-direction: column; border-right: 1px solid #e0e0e0; }
.body { flex: 1; min-height: 0; padding-top: 2px; }
.title { height: 10px; text-align: center; white-space: nowrap; color: #333; }
.title .caret { margin: 0 0 2px 1px; }
.g-select { width: 54px; }
.g-props { width: 46px; }
.g-clip { width: 51px; }
.g-geo { width: 93px; }
.g-mod { width: 146px; }
.g-view { width: 41px; }
.g-create { width: 51px; }
.g-meas { width: 34px; }
.big-on { display: flex; flex-direction: column; align-items: center; gap: 3px; width: 36px; height: 45px; margin: 0 0 0 9px; padding-top: 3px; background: #b9d9f3; border: 1px solid #7fb2de; }
.big-on svg { width: 16px; height: 16px; }
.stack { display: flex; flex-direction: column; align-items: center; gap: 1px; }
.wide { width: 24px; height: 22px; display: flex; align-items: center; justify-content: center; }
.clip { display: flex; justify-content: space-between; padding-left: 7px; padding-right: 2px; }
.paste { display: flex; flex-direction: column; align-items: center; gap: 3px; color: #aaa; }
.paste .caret { border-top-color: #777; }
.rows3 { display: flex; flex-direction: column; }
.geo-row, .view-row { display: flex; align-items: center; height: 15px; }
.geo-row { padding-left: 4px; }
.geo-btn { width: 50px; display: flex; align-items: center; gap: 2px; }
.geo-btn .caret { margin-left: 2px; }
.mod { display: flex; padding-left: 2px; gap: 1px; }
.big-grid { display: grid; grid-template-columns: repeat(4, 24px); grid-auto-rows: 22px; align-content: start; }
.two { grid-template-columns: repeat(2, 24px); padding-left: 1px; }
.big { display: flex; align-items: center; justify-content: center; }
.small-grid { display: grid; grid-template-columns: repeat(3, 15px); grid-auto-rows: 15px; }
.view-row { padding-left: 3px; gap: 3px; }
.meas { display: flex; align-items: center; gap: 4px; height: 22px; }
.options { height: 17px; flex: none; background: #eee; margin: 0 2px 1px; border-bottom: 1px solid #bbb; }

.work { flex: 1; min-height: 0; display: flex; }
.side { width: 210px; flex: none; margin-right: 2px; display: flex; flex-direction: column; background: #f0f0f0; border-left: 2px solid #d4d4d4; }
.side-head { height: 15px; display: flex; align-items: center; justify-content: space-between; padding: 0 2px; }
.type { height: 42px; display: flex; align-items: center; gap: 3px; padding: 0 3px; border-bottom: 1px solid #ddd; }
.type span { flex: 1; }
.thumb { width: 40px; height: 40px; display: flex; align-items: center; justify-content: center; border: 1px solid #e0e0e0; }
.thumb svg { width: 20px; height: 20px; }
.selector { height: 16px; display: flex; align-items: center; gap: 3px; padding-left: 1px; }
select { appearance: none; background-image: linear-gradient(45deg, transparent 40%, #999 40%, #999 60%, transparent 60%), linear-gradient(-45deg, transparent 40%, #999 40%, #999 60%, transparent 60%); background-position: right 5px center, right 2px center; background-size: 3px 3px; background-repeat: no-repeat; }
.selector select { width: 151px; height: 13px; background-color: #e1e1e1; border: 1px solid #bbb; padding-left: 1px; }
.edit-type { display: flex; align-items: center; gap: 1px; white-space: nowrap; }
.grid-wrap { flex: 1; min-height: 0; overflow: hidden; display: flex; gap: 2px; }
table { border-collapse: collapse; table-layout: fixed; background: #fff; align-self: flex-start; width: 195px; }
.c-name { width: 95px; }
.c-value { width: 94px; }
.c-tail { width: 6px; }
tr { height: 11px; }
td, th { padding: 0; line-height: 10px; height: 11px; border-bottom: 1px solid #e2e2e2; text-align: left; font-weight: 400; }
.sec, .sec th { height: 12px; }
.sec th { background: #dcdcdc; padding: 0 2px; }
.sec span { float: left; line-height: 11px; }
.sec svg { float: right; width: 8px; height: 8px; margin-top: 1px; }
.name { padding-left: 6px; }
.name label { display: block; height: 10px; white-space: pre; }
.value { border-left: 1px solid #e2e2e2; border-right: 1px solid #e2e2e2; }
.value > * { display: block; height: 10px; }
.value output { padding-left: 1px; }
.off { color: #999; }
.field { width: 100%; border: 1px solid #333; padding-left: 2px; line-height: 8px; }
.edit { width: 100%; background: #e1e1e1; border: 1px solid #c4c4c4; line-height: 8px; text-align: center; }
input[type="checkbox"] { appearance: none; width: 8px; height: 8px; margin: 1px 0 1px 2px; border: 1px solid #444; background: #fff; }
input[type="checkbox"]:disabled { border-color: #ccc; }
.vbar { width: 9px; flex: none; display: flex; flex-direction: column; align-items: center; background: #f0f0f0; }
.vbar svg { width: 9px; height: 9px; stroke: #333; }
.side-thumb { width: 9px; flex: 3; background: #cdcdcd; }
.fill { flex: 1; }
.side-foot { height: 16px; display: flex; align-items: center; justify-content: space-between; padding: 0 2px; }
.side-foot a { color: #1a6fc4; }
.side-foot button { width: 44px; height: 13px; background: #cdcdcd; color: #999; }
.side-tabs { height: 14px; display: flex; background: #cbcbcb; }
.side-tabs button { padding: 0 4px 0 3px; white-space: nowrap; }
.side-tabs .active { background: #f0f0f0; }

.viewer { flex: 1; min-width: 0; display: flex; flex-direction: column; margin-right: 3px; }
.doc-tabs { height: 14px; flex: none; display: flex; align-items: center; justify-content: space-between; padding-right: 1px; }
.doc { width: 79px; height: 14px; display: flex; align-items: center; gap: 4px; background: #fff; padding: 0 2px; }
.doc span { flex: 1; }
.stage { flex: 1; min-height: 0; display: flex; background: #fff; padding-left: 1px; }
.scene { flex: 1; min-width: 0; height: 100%; }
.thin { stroke: #555; stroke-width: 1px; fill: none; }
.plank { fill: #fff; stroke: #666; stroke-width: 1px; }
.edge { stroke: #222; stroke-width: 1.3px; }
.post { fill: #fff; stroke: #666; stroke-width: 1px; }
.front { fill: none; stroke: #444; }
.post-side { stroke: #ccc; stroke-width: 6px; }
.foot { stroke: #222; stroke-width: 1px; }
.white { fill: #fff; stroke: none; }
.cube { stroke: #999; }
.cube ellipse { fill: #eee; stroke: #ccc; }
.cube .hole { fill: #fff; }
.cube .shade { fill: #d8d8d8; stroke: none; }
.cube .mark { stroke: #aaa; }
.cube text { font-size: 4px; fill: #777; stroke: none; }
.navbar { stroke: #aaa; }
.navbar rect { fill: #f3f3f3; stroke: #ccc; }
.navbar .tri { fill: #777; stroke: none; }
.front, .post { stroke-linejoin: miter; }
.post-side { stroke: #e4e4e4; stroke-width: 3px; }
.view-v { width: 10px; }
.view-thumb { width: 10px; height: 11px; background: #cdcdcd; }
.view-bar { height: 12px; flex: none; display: flex; align-items: center; background: #f0f0f0; padding-right: 11px; }
.ratio { width: 49px; padding-left: 16px; white-space: nowrap; }
.vt { width: 13px; height: 12px; display: flex; align-items: center; justify-content: center; flex: none; }
.hbar { flex: 1; height: 9px; display: flex; padding-left: 144px; }
.h-thumb { width: 10px; background: #cdcdcd; }

.status { height: 16px; flex: none; display: flex; align-items: center; padding: 0 59px 0 2px; }
.hint { width: 247px; flex: none; overflow: hidden; white-space: nowrap; margin-right: 2px; }
.combo { width: 127px; height: 12px; margin-left: 4px; background-color: #fff; padding-left: 2px; color: #888; flex: none; }
.count { display: flex; align-items: center; width: 28px; margin-left: 4px; }
.pair { display: flex; gap: 4px; margin-left: 4px; }
.sel-tools { display: flex; align-items: center; margin-left: auto; }
.st { width: 16px; height: 14px; display: flex; align-items: center; justify-content: center; }
.sel-tools .count { margin-left: 0; width: 18px; }
</style>
